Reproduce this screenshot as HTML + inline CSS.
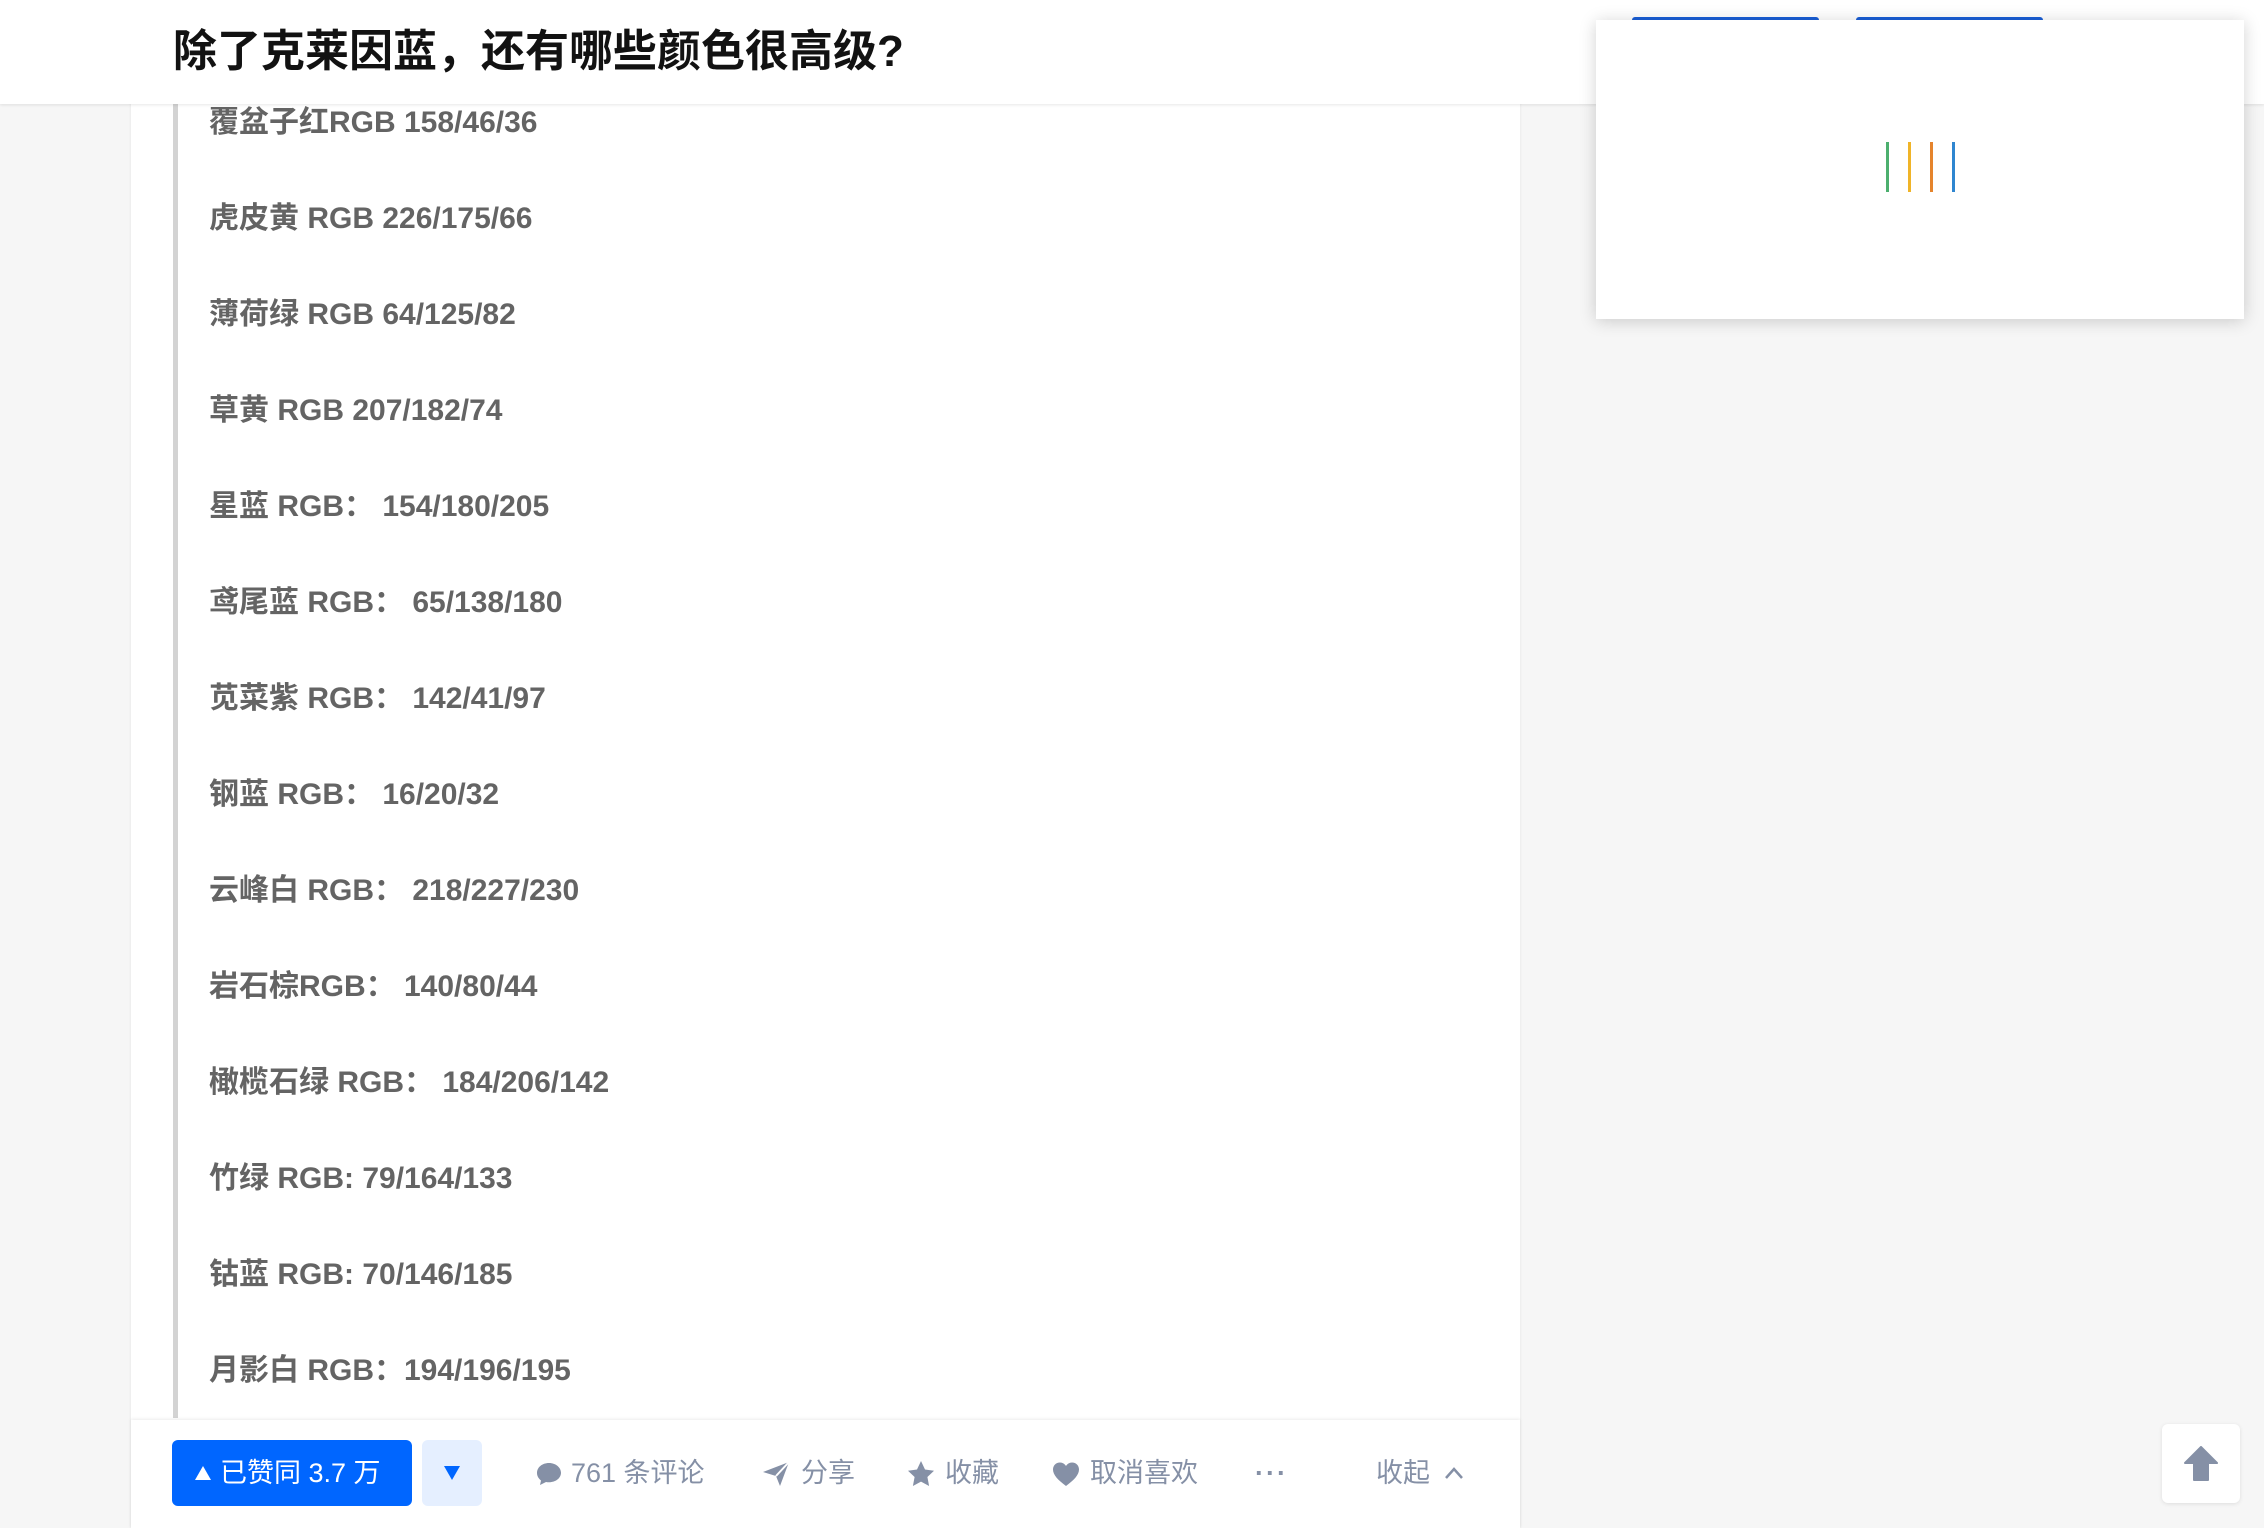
<!DOCTYPE html>
<html><head><meta charset="utf-8">
<style>
*{margin:0;padding:0;box-sizing:border-box}
html,body{width:2264px;height:1528px;overflow:hidden;background:#f6f6f6;font-family:"Liberation Sans","Noto Sans CJK SC",sans-serif}
.header{position:absolute;left:0;top:0;width:2264px;height:104px;background:#fff;box-shadow:0 1px 3px rgba(18,18,18,.1);z-index:3}
.title{position:absolute;left:173px;top:24px;font-size:44px;font-weight:bold;color:#121212;line-height:56px}
.card{position:absolute;left:131px;top:0;width:1389px;height:1528px;background:#fff;box-shadow:0 1px 3px rgba(18,18,18,.08)}
.bar{position:absolute;left:173px;top:100px;width:5px;height:1318px;background:#d3d3d3}
.item{position:absolute;left:209px;font-size:30px;font-weight:bold;color:#646464;line-height:40px;white-space:pre}
.actions{position:absolute;left:131px;top:1420px;width:1389px;height:108px;background:#fff;box-shadow:0 -1px 3px rgba(18,18,18,.08);z-index:2}
.vote{position:absolute;left:41px;top:20px;width:240px;height:66px;background:#0066ff;border-radius:6px;color:#fff;font-size:27px;line-height:66px;padding-left:22px}
.down{position:absolute;left:291px;top:20px;width:60px;height:66px;background:#e5efff;border-radius:6px}
.act{position:absolute;top:20px;line-height:66px;font-size:27px;color:#8590a6}
.side{position:absolute;left:1596px;top:20px;width:648px;height:299px;background:#fff;box-shadow:0 2px 16px rgba(0,0,0,.18);z-index:5}
.blue{position:absolute;top:17px;height:4px;background:#1a5fd8;border-radius:3px 3px 0 0;z-index:4}
.ln{position:absolute;top:122px;width:3px;height:50px}
.top{position:absolute;left:2162px;top:1424px;width:78px;height:79px;background:#fff;border-radius:6px;box-shadow:0 1px 4px rgba(0,0,0,.1)}
</style></head><body>
<div class="card">
</div>
<div class="bar"></div>
<div class="item" style="top:103px">覆盆子红RGB 158/46/36</div>
<div class="item" style="top:199px">虎皮黄 RGB 226/175/66</div>
<div class="item" style="top:295px">薄荷绿 RGB 64/125/82</div>
<div class="item" style="top:391px">草黄 RGB 207/182/74</div>
<div class="item" style="top:487px">星蓝 RGB： 154/180/205</div>
<div class="item" style="top:583px">鸢尾蓝 RGB： 65/138/180</div>
<div class="item" style="top:679px">苋菜紫 RGB： 142/41/97</div>
<div class="item" style="top:775px">钢蓝 RGB： 16/20/32</div>
<div class="item" style="top:871px">云峰白 RGB： 218/227/230</div>
<div class="item" style="top:967px">岩石棕RGB： 140/80/44</div>
<div class="item" style="top:1063px">橄榄石绿 RGB： 184/206/142</div>
<div class="item" style="top:1159px">竹绿 RGB: 79/164/133</div>
<div class="item" style="top:1255px">钴蓝 RGB: 70/146/185</div>
<div class="item" style="top:1351px">月影白 RGB：194/196/195</div>

<div class="header"><div class="title">除了克莱因蓝，还有哪些颜色很高级?</div></div>
<div class="blue" style="left:1632px;width:187px"></div>
<div class="blue" style="left:1856px;width:187px"></div>
<div class="side">
<div class="ln" style="left:290px;background:#4caf6e"></div>
<div class="ln" style="left:312px;background:#f0b428"></div>
<div class="ln" style="left:334px;background:#e5842c"></div>
<div class="ln" style="left:356px;background:#2f86d0"></div>
</div>

<div class="actions">
<div class="vote"><svg width="18" height="16" viewBox="0 0 18 16" style="vertical-align:1px;margin-right:8px"><path d="M9 1L17 15H1Z" fill="#fff"/></svg>已赞同 3.7 万</div>
<div class="down"><svg width="18" height="16" viewBox="0 0 18 16" style="position:absolute;left:21px;top:25px"><path d="M1 1H17L9 15Z" fill="#0066ff"/></svg></div>
<div class="act" style="left:404px"><svg width="28" height="26" viewBox="0 0 28 26" style="vertical-align:-5px;margin-right:8px"><path d="M14 2C7 2 2 6.5 2 12c0 3 1.5 5.5 4 7.5L5 24l6-3c1 .2 2 .3 3 .3 7 0 12-4.5 12-9.5S21 2 14 2z" fill="#8590a6"/></svg>761 条评论</div>
<div class="act" style="left:630px"><svg width="30" height="28" viewBox="0 0 30 28" style="vertical-align:-6px;margin-right:10px"><path d="M2 12L28 2 19 26 15 16Z" fill="#8590a6"/><path d="M15 16L28 2" stroke="#fff" stroke-width="2"/></svg>分享</div>
<div class="act" style="left:776px"><svg width="28" height="27" viewBox="0 0 28 27" style="vertical-align:-5px;margin-right:10px"><path d="M14 1l4 8.5 9 1.2-6.6 6.3 1.7 9L14 21.6 5.9 26l1.7-9L1 10.7l9-1.2z" fill="#8590a6"/></svg>收藏</div>
<div class="act" style="left:921px"><svg width="28" height="26" viewBox="0 0 28 26" style="vertical-align:-5px;margin-right:10px"><path d="M14 25C6 19 1 14 1 8.5 1 4.5 4 1.5 8 1.5c2.7 0 4.7 1.5 6 3.5 1.3-2 3.3-3.5 6-3.5 4 0 7 3 7 7C27 14 22 19 14 25z" fill="#8590a6"/></svg>取消喜欢</div>
<div class="act" style="left:1124px;letter-spacing:2px;font-weight:bold">···</div>
<div class="act" style="left:1245px">收起 <svg width="20" height="14" viewBox="0 0 20 14" style="vertical-align:2px;margin-left:6px"><path d="M2 12L10 3l8 9" fill="none" stroke="#8590a6" stroke-width="2.5"/></svg></div>
</div>

<div class="top"><svg width="34" height="36" viewBox="0 0 34 36" style="position:absolute;left:22px;top:22px"><path d="M17 1L33 17H24V34H10V17H1Z" fill="#8590a6" stroke="#8590a6" stroke-linejoin="round" stroke-width="2"/></svg></div>
</body></html>
